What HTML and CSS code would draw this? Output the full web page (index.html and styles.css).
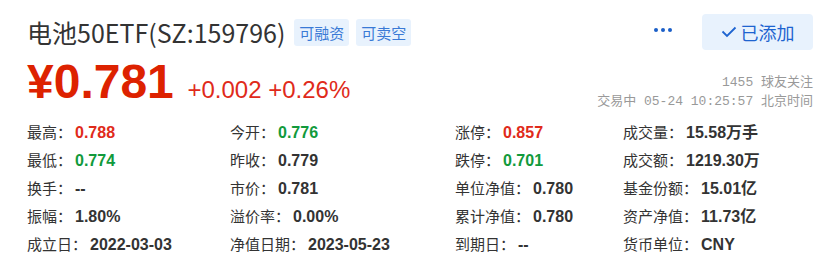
FILE: index.html
```html
<!DOCTYPE html>
<html lang="zh-CN">
<head>
  <meta charset="UTF-8" />
  <title>电池50ETF(SZ:159796)</title>
  <link rel="stylesheet" href="styles.css">
</head>
<body>
  <div class="quote">
    <div class="quote-head">
      <div class="stock-name">
        <h1>电池50ETF(SZ:159796)</h1>
        <span class="tag">可融资</span>
        <span class="tag">可卖空</span>
      </div>
      <div class="actions">
        <span class="more"><i></i><i></i><i></i></span>
        <button class="follow-btn">
          <svg width="16" height="12" viewBox="0 0 16 12"><polyline points="1.5,5.5 6,10 14.5,1.5" fill="none" stroke="currentColor" stroke-width="1.8"/></svg>
          已添加
        </button>
      </div>
    </div>

    <div class="price-row">
      <div class="price">
        <strong>¥0.781</strong>
        <span class="change">+0.002 +0.26%</span>
      </div>
      <div class="meta">
        <div>1455 球友关注</div>
        <div>交易中 05-24 10:25:57 北京时间</div>
      </div>
    </div>

    <div class="quote-table">
      <div class="cell">最高：<span class="rise">0.788</span></div>
      <div class="cell">今开：<span class="fall">0.776</span></div>
      <div class="cell">涨停：<span class="rise">0.857</span></div>
      <div class="cell">成交量：<span>15.58万手</span></div>

      <div class="cell">最低：<span class="fall">0.774</span></div>
      <div class="cell">昨收：<span>0.779</span></div>
      <div class="cell">跌停：<span class="fall">0.701</span></div>
      <div class="cell">成交额：<span>1219.30万</span></div>

      <div class="cell">换手：<span>--</span></div>
      <div class="cell">市价：<span>0.781</span></div>
      <div class="cell">单位净值：<span>0.780</span></div>
      <div class="cell">基金份额：<span>15.01亿</span></div>

      <div class="cell">振幅：<span>1.80%</span></div>
      <div class="cell">溢价率：<span>0.00%</span></div>
      <div class="cell">累计净值：<span>0.780</span></div>
      <div class="cell">资产净值：<span>11.73亿</span></div>

      <div class="cell">成立日：<span>2022-03-03</span></div>
      <div class="cell">净值日期：<span>2023-05-23</span></div>
      <div class="cell">到期日：<span>--</span></div>
      <div class="cell">货币单位：<span>CNY</span></div>
    </div>
  </div>
</body>
</html>
```

FILE: styles.css
```css
* {
  box-sizing: border-box;
}

body {
  margin: 0;
  background: #fff;
  font-family: "Noto Sans CJK SC", "Liberation Sans", sans-serif;
  color: #333;
}

.quote {
  padding: 14px 18px 0 27px;
}

.quote-head {
  display: flex;
  justify-content: space-between;
  align-items: center;
  height: 36px;
}

.stock-name {
  display: flex;
  align-items: center;
  gap: 7px;
}

.stock-name h1 {
  margin: 0 2px 0 0;
  font-size: 25px;
  font-weight: 400;
  color: #333;
  line-height: 1;
}

.tag {
  display: inline-block;
  height: 27px;
  line-height: 27px;
  padding: 0 5px;
  border-radius: 3px;
  background: #e8f2fd;
  color: #3a7ad6;
  font-size: 15px;
}

.actions {
  display: flex;
  align-items: center;
  gap: 30px;
}

.more {
  display: flex;
  gap: 3px;
  margin-top: -4px;
}

.more i {
  width: 4px;
  height: 4px;
  border-radius: 50%;
  background: #1b5fc8;
}

.follow-btn {
  display: flex;
  align-items: center;
  justify-content: center;
  gap: 4px;
  width: 111px;
  height: 36px;
  border: none;
  border-radius: 4px;
  background: #e8f2fd;
  color: #1e64d0;
  font-family: inherit;
  font-size: 18px;
  cursor: pointer;
}

.price-row {
  display: flex;
  justify-content: space-between;
  align-items: flex-end;
  margin-top: 8px;
}

.price strong {
  font-family: "Liberation Sans", Arial, sans-serif;
  font-size: 48px;
  font-weight: 700;
  color: #dd2200;
  line-height: 1;
}

.change {
  margin-left: 10px;
  font-family: "Liberation Sans", Arial, sans-serif;
  font-size: 24px;
  color: #e02a1a;
}

.meta {
  text-align: right;
  font-family: "Liberation Mono", "Noto Sans CJK SC", monospace;
  font-size: 13px;
  line-height: 19px;
  color: #999;
  margin-bottom: -5px;
}

.quote-table {
  display: grid;
  grid-template-columns: 203px 225px 168px auto;
  margin-top: 12px;
}

.cell {
  font-size: 15px;
  line-height: 27px;
  color: #333;
  white-space: nowrap;
}

.cell span {
  margin-left: 3px;
  font-family: "Liberation Sans", Arial, "Noto Sans CJK SC", sans-serif;
  font-weight: 700;
  font-size: 16px;
  color: #333;
}

.cell .rise {
  color: #e02a1a;
}

.cell .fall {
  color: #119a3c;
}
```
